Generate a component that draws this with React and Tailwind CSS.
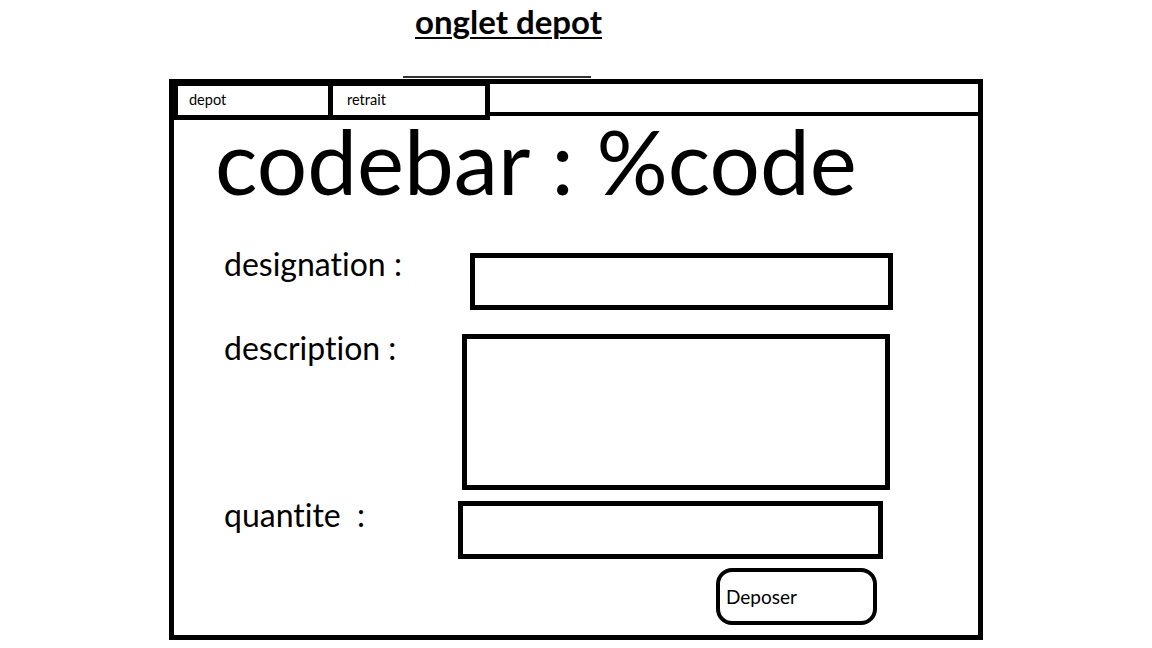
export default function App() {
  return (
    <div className="w-[1152px] h-[648px] bg-white overflow-hidden text-black font-['Lato','Open_Sans',sans-serif] [font-variant-ligatures:none]">
      {/* Title */}
      <div className="pt-[5px] pl-[415px]">
        <h1 className="text-[33px] leading-none font-bold underline decoration-2 underline-offset-[3px]">onglet depot</h1>
      </div>
      <div className="ml-[403px] mt-[38px] w-[188px] h-[2px] bg-[#333]" />

      {/* Window frame */}
      <div className="ml-[169px] mt-[1px] w-[814px] h-[561px] border-[5px] border-black">
        {/* Tabs */}
        <div className="flex h-[36px]">
          <div className="w-[159px] h-full border-l-4 border-t-2 border-b-[5px] border-r-[5px] border-black pl-[11px] text-[14.5px] leading-none flex items-center">
            depot
          </div>
          <div className="w-[157px] h-full border-t-2 border-b-[5px] border-r-[5px] border-black pl-[14px] text-[14.5px] leading-none flex items-center">
            retrait
          </div>
          <div className="flex-1 h-[32px] border-b-4 border-black" />
        </div>

        {/* Content */}
        <div className="pl-[41px] text-[89px] leading-none mt-[-4px]">codebar : %code</div>

        <div className="flex items-start mt-[48px] pl-[50px]">
          <label className="w-[246px] text-[32px] leading-none mt-[-5px]">designation :</label>
          <div className="w-[423px] h-[57px] border-[5px] border-black" />
        </div>

        <div className="flex items-start mt-[24px] pl-[50px]">
          <label className="w-[238px] text-[32px] leading-none mt-[-2px]">description :</label>
          <div className="w-[428px] h-[156px] border-[5px] border-black" />
        </div>

        <div className="flex items-start mt-[11px] pl-[50px]">
          <label className="w-[234px] text-[32px] leading-none mt-[-2px] whitespace-pre">quantite  :</label>
          <div className="w-[425px] h-[58px] border-[5px] border-black" />
        </div>

        <div className="mt-[9px] pl-[542px]">
          <button className="w-[161px] h-[57px] border-4 border-black rounded-[16px] text-left pl-[6px] text-[19px] leading-none">
            Deposer
          </button>
        </div>
      </div>
    </div>
  )
}
